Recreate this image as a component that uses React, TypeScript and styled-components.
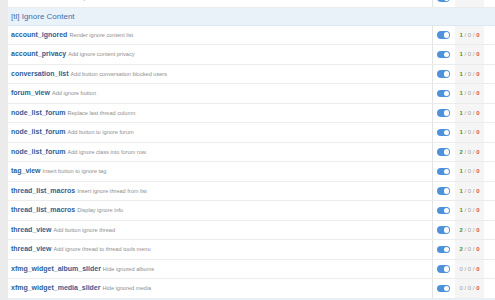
import React from "react";
import styled, { createGlobalStyle } from "styled-components";

const Global = createGlobalStyle`
  html, body { margin: 0; padding: 0; background: #fff; overflow: hidden; }
  body { font-family: "Liberation Sans", Arial, sans-serif; }
`;

const Page = styled.div`
  display: flex;
  width: 495px;
  height: 300px;
  overflow: hidden;
`;

const SideStrip = styled.div`
  width: 8px;
  flex: none;
  background: #ebebeb;
`;

const List = styled.div`
  flex: 1;
  display: flex;
  flex-direction: column;
  margin-top: -11.5px;
`;

const SectionHeader = styled.div`
  height: 16.5px;
  flex: none;
  display: flex;
  align-items: center;
  padding-left: 3px;
  background: #e9f1f9;
  color: #3f70aa;
  font-size: 8px;
  border-bottom: 1px solid #dfe8f1;
`;

const Row = styled.div`
  flex: none;
  height: 18.5px;
  display: grid;
  grid-template-columns: 1fr 22px 29px 11px;
  border-bottom: 1px solid #ececec;
`;

const MainCell = styled.div`
  display: flex;
  align-items: baseline;
  gap: 2px;
  padding: 0 0 0 3px;
  border-right: 1px solid #e4e4e4;
  line-height: 18.5px;
  white-space: nowrap;
  overflow: hidden;
`;

const Name = styled.span`
  font-size: 7px;
  font-weight: bold;
  color: #2f5f96;
`;

const Desc = styled.span`
  font-size: 5.6px;
  color: #8e8e8e;
`;

const ToggleCell = styled.div`
  display: flex;
  align-items: center;
  padding-left: 4px;
`;

const Toggle = styled.span`
  width: 13px;
  height: 7.5px;
  border-radius: 4px;
  background: #4f92dc;
  display: flex;
  align-items: center;
  justify-content: flex-end;
  padding-right: 1px;
  box-sizing: border-box;
  &::after {
    content: "";
    width: 5.5px;
    height: 5.5px;
    border-radius: 50%;
    background: #fff;
  }
`;

const CountCell = styled.div`
  background: #f5f5f5;
  display: flex;
  align-items: center;
  justify-content: center;
  font-size: 6px;
  color: #a0a0a0;
  white-space: pre;
`;

const Count = styled.span<{ $tone: "green" | "gray" | "red" }>`
  font-weight: ${(p) => (p.$tone === "gray" ? "normal" : "bold")};
  color: ${(p) =>
    p.$tone === "green" ? "#5e8f2a" : p.$tone === "red" ? "#d9534f" : "#a0a0a0"};
`;

const Blank = styled.div``;

const BottomHeader = styled.div`
  flex: 1;
  background: #e9f1f9;
`;

type Item = { name: string; desc: string; n: number };

const items: Item[] = [
  { name: "account_ignored", desc: "Render ignore content list", n: 1 },
  { name: "account_privacy", desc: "Add ignore content privacy", n: 1 },
  { name: "conversation_list", desc: "Add button conversation blocked users", n: 1 },
  { name: "forum_view", desc: "Add ignore button", n: 1 },
  { name: "node_list_forum", desc: "Replace last thread column", n: 1 },
  { name: "node_list_forum", desc: "Add button to ignore forum", n: 1 },
  { name: "node_list_forum", desc: "Add ignore class into forum row.", n: 2 },
  { name: "tag_view", desc: "Insert button to ignore tag", n: 1 },
  { name: "thread_list_macros", desc: "Insert ignore thread from list", n: 1 },
  { name: "thread_list_macros", desc: "Display ignore info", n: 1 },
  { name: "thread_view", desc: "Add button ignore thread", n: 2 },
  { name: "thread_view", desc: "Add ignore thread to thread tools menu", n: 2 },
  { name: "xfmg_widget_album_slider", desc: "Hide ignored albums", n: 0 },
  { name: "xfmg_widget_media_slider", desc: "Hide ignored media", n: 0 },
];

function ListRow({ item }: { item: Item }) {
  return (
    <Row>
      <MainCell>
        <Name>{item.name}</Name>
        <Desc>{item.desc}</Desc>
      </MainCell>
      <ToggleCell>
        <Toggle />
      </ToggleCell>
      <CountCell>
        <Count $tone={item.n > 0 ? "green" : "gray"}>{item.n}</Count>
        {" / 0 / "}
        <Count $tone="red">0</Count>
      </CountCell>
      <Blank />
    </Row>
  );
}

export default function App() {
  return (
    <>
      <Global />
      <Page>
        <SideStrip />
        <List>
          <ListRow item={{ name: "error", desc: "Custom 404 error template.", n: 1 }} />
          <SectionHeader>[tl] Ignore Content</SectionHeader>
          {items.map((it, i) => (
            <ListRow key={i} item={it} />
          ))}
          <BottomHeader />
        </List>
      </Page>
    </>
  );
}
